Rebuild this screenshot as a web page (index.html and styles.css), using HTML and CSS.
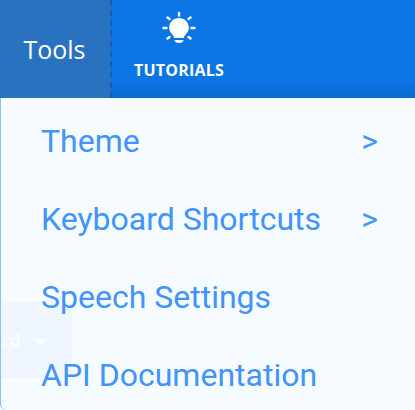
FILE: index.html
```html
<!DOCTYPE html>
<html lang="en">
<head>
    <meta charset="UTF-8">
    <title>Tools menu</title>
    <link rel="stylesheet" href="styles.css">
</head>
<body>

<div class="navbar">
    <div class="nav-tools">Tools</div>
    <div class="nav-tutorials">
        <svg class="bulb" width="36" height="36" viewBox="0 0 36 36">
            <g stroke="#fff" stroke-width="2.4" stroke-linecap="round">
                <line x1="18" y1="2" x2="18" y2="4.5"/>
                <line x1="6.5" y1="6.5" x2="8.5" y2="8"/>
                <line x1="29.5" y1="6.5" x2="27.5" y2="8"/>
                <line x1="2.5" y1="17" x2="5.5" y2="17"/>
                <line x1="30.5" y1="17" x2="33.5" y2="17"/>
                <line x1="6.5" y1="27.5" x2="8.5" y2="26"/>
                <line x1="29.5" y1="27.5" x2="27.5" y2="26"/>
            </g>
            <path fill="#fff" d="M18 7c-5.5 0-9.8 4.2-9.8 9.4 0 3.2 1.5 5.4 3.3 7.3 1 1.1 1.6 2.2 1.9 3.3h9.2c.3-1.1.9-2.2 1.9-3.3 1.8-1.9 3.3-4.1 3.3-7.3C27.800 11.200 23.500 7 18 7z"/>
            <path fill="#fff" d="M13.500 29h9c0 .8-.3 1.500-1 2-.9.7-2.100 1-3.500 1s-2.600-.3-3.500-1c-.7-.5-1-1.200-1-2z"/>
        </svg>
        <span class="nav-label">TUTORIALS</span>
    </div>
</div>

<div class="menu-wrap">
    <div class="ghost-button">rd<span class="ghost-caret"></span></div>
    <ul class="menu">
        <li class="menu-item"><span>Theme</span><span class="arrow">&gt;</span></li>
        <li class="menu-item"><span>Keyboard Shortcuts</span><span class="arrow">&gt;</span></li>
        <li class="menu-item"><span>Speech Settings</span></li>
        <li class="menu-item"><span>API Documentation</span></li>
    </ul>
</div>

</body>
</html>
```

FILE: styles.css
```css
body {
    margin: 0;
    width: 415px;
    height: 410px;
    overflow: hidden;
    background-color: #f5fbff;
}
.navbar {
    display: flex;
    height: 98px;
    background: linear-gradient(#0b76e3 80%, #0a6bd0);
    color: #fff;
    font-family: "Open Sans", sans-serif;
}
.nav-tools {
    width: 110px;
    display: flex;
    align-items: center;
    justify-content: center;
    font-size: 25px;
    padding-bottom: 1px;
    padding-right: 1px;
    box-sizing: border-box;
    background-color: #2872c0;
}
.nav-tutorials {
    width: 136px;
    box-sizing: border-box;
    border-left: 2px dashed #1a5fb0;
    display: flex;
    flex-direction: column;
    align-items: center;
    padding-top: 11px;
}
.bulb {
    display: block;
}
.nav-label {
    margin-top: 13px;
    font-size: 16px;
    font-weight: 700;
    line-height: 20px;
    letter-spacing: 0.2px;
}
.menu-wrap {
    position: relative;
    height: 312px;
}
.ghost-button {
    position: absolute;
    left: 0;
    top: 205px;
    width: 72px;
    height: 75px;
    box-sizing: border-box;
    padding-left: 2px;
    background-color: #e1eaff;
    color: #fff;
    font-family: "Open Sans", sans-serif;
    font-size: 17px;
    font-weight: 700;
    line-height: 75px;
}
.ghost-caret {
    display: inline-block;
    margin-left: 14px;
    vertical-align: middle;
    border-left: 7px solid transparent;
    border-right: 7px solid transparent;
    border-top: 7px solid #fff;
}
.menu {
    position: relative;
    list-style: none;
    margin: 0;
    padding: 4px 37px 0 41px;
    height: 312px;
    box-sizing: border-box;
    background-color: rgba(245, 251, 255, 0.7);
    border-left: 1px solid #84c2ff;
    border-bottom-left-radius: 6px;
    font-family: Roboto, sans-serif;
    font-size: 32px;
    color: #4094fb;
}
.menu-item {
    display: flex;
    justify-content: space-between;
    align-items: center;
    height: 78px;
}
.menu-item span:first-child {
    margin-left: -1px;
}
```
